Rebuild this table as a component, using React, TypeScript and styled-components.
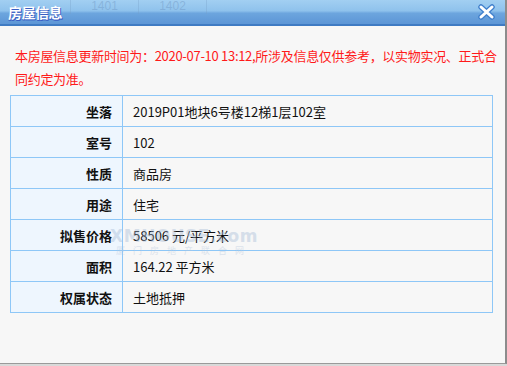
import styled, { createGlobalStyle } from 'styled-components';

const GlobalStyle = createGlobalStyle`
  html, body {
    margin: 0;
    padding: 0;
    background: #d9d9d9;
    font-family: "Noto Sans CJK SC", "Noto Sans", sans-serif;
  }
`;

const Dialog = styled.div`
  width: 505px;
  height: 363px;
  background: #f7f7f7;
  border-right: 2px solid #8c8c8c;
  border-bottom: 1px solid #9a9a9a;
  display: flex;
  flex-direction: column;
`;

const TitleBar = styled.div`
  position: relative;
  height: 24px;
  flex-shrink: 0;
  border-bottom: 2px solid #3f7bc3;
  background: linear-gradient(
    to bottom,
    #a2cff2 0%,
    #8fc2ec 45%,
    #6ca5de 55%,
    #5d96d6 100%
  );
  display: flex;
  align-items: center;
  justify-content: space-between;
  padding: 0 8px 0 8px;
  overflow: hidden;
`;

const Ghost = styled.div`
  position: absolute;
  top: 0;
  left: 62px;
  display: flex;
  height: 14px;
  pointer-events: none;
`;

const GhostCell = styled.div<{ $w: number }>`
  width: ${(p) => p.$w}px;
  border-right: 1px solid rgba(120, 160, 200, 0.35);
  color: rgba(110, 150, 195, 0.45);
  font-family: "Liberation Sans", sans-serif;
  font-size: 12px;
  line-height: 12px;
  text-align: center;
`;

const Title = styled.span`
  position: relative;
  color: #ffffff;
  font-weight: bold;
  font-size: 14px;
  letter-spacing: -0.5px;
  text-shadow: 1px 1px 0 #3a5fc4, 0 1px 0 #3a5fc4;
`;

const CloseButton = styled.button`
  position: relative;
  border: 0;
  background: transparent;
  padding: 0;
  width: 17px;
  height: 16px;
  margin-right: 2px;
  cursor: pointer;
  display: flex;
`;

const Content = styled.div`
  padding: 18px 12px 0 10px;
`;

const Notice = styled.p`
  margin: 0 0 5px 5px;
  color: #ff1a1a;
  font-size: 13px;
  line-height: 23px;
  letter-spacing: -0.3px;
  white-space: nowrap;
`;

const InfoWrap = styled.div`
  position: relative;
`;

const InfoTable = styled.table`
  width: 483px;
  border-collapse: collapse;
  font-size: 13px;
  color: #111;
`;

const Label = styled.th`
  width: 101px;
  height: 30px;
  padding: 0 10px 0 0;
  border: 1px solid #8ec7f7;
  background: #eef6fe;
  text-align: right;
  font-weight: bold;
`;

const Value = styled.td`
  height: 30px;
  padding: 0 0 0 10px;
  border: 1px solid #8ec7f7;
  text-align: left;
`;

const Watermark = styled.div`
  position: absolute;
  left: 106px;
  top: 133px;
  width: 136px;
  display: flex;
  flex-direction: column;
  align-items: center;
  pointer-events: none;
  opacity: 0.4;
`;

const MarkLogo = styled.span`
  font-family: "DejaVu Sans", sans-serif;
  font-weight: bold;
  font-size: 17px;
  letter-spacing: 0.5px;
  color: #a3b9d6;
  line-height: 17px;
`;

const MarkSub = styled.span`
  font-size: 9px;
  letter-spacing: 8px;
  color: #b3c5dc;
  line-height: 11px;
`;

const rows: [string, string][] = [
  ['坐落', '2019P01地块6号楼12梯1层102室'],
  ['室号', '102'],
  ['性质', '商品房'],
  ['用途', '住宅'],
  ['拟售价格', '58506 元/平方米'],
  ['面积', '164.22 平方米'],
  ['权属状态', '土地抵押'],
];

const CloseIcon = () => (
  <svg width="17" height="16" viewBox="0 0 17 16">
    <path d="M3 3 L14 13 M14 3 L3 13" stroke="#3f7fcc" strokeWidth="5.5" strokeLinecap="round" />
    <path d="M3 3 L14 13 M14 3 L3 13" stroke="#ffffff" strokeWidth="3" strokeLinecap="round" />
  </svg>
);

const App = () => (
  <>
    <GlobalStyle />
    <Dialog>
      <TitleBar>
        <Ghost>
          <GhostCell $w={8}>&nbsp;</GhostCell>
          <GhostCell $w={67}>1401</GhostCell>
          <GhostCell $w={67}>1402</GhostCell>
        </Ghost>
        <Title>房屋信息</Title>
        <CloseButton aria-label="关闭">
          <CloseIcon />
        </CloseButton>
      </TitleBar>
      <Content>
        <Notice>
          本房屋信息更新时间为：2020-07-10 13:12,所涉及信息仅供参考，以实物实况、正式合
          <br />
          同约定为准。
        </Notice>
        <InfoWrap>
          <InfoTable>
            <tbody>
              {rows.map(([label, value]) => (
                <tr key={label}>
                  <Label>{label}</Label>
                  <Value>{value}</Value>
                </tr>
              ))}
            </tbody>
          </InfoTable>
          <Watermark>
            <MarkLogo>XMHOUSE.com</MarkLogo>
            <MarkSub>厦门房地产联合网</MarkSub>
          </Watermark>
        </InfoWrap>
      </Content>
    </Dialog>
  </>
);

export default App;
